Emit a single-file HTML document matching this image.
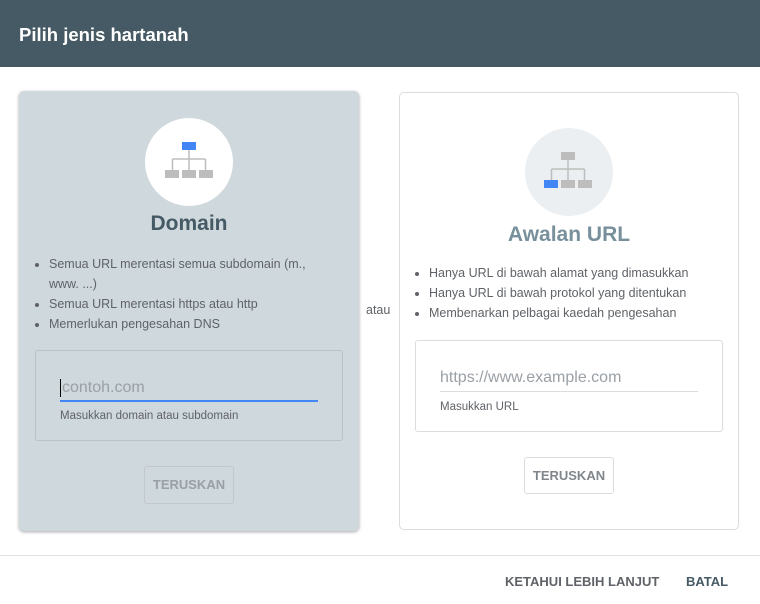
<!DOCTYPE html>
<html><head><style>
*{box-sizing:border-box;margin:0;padding:0}
body{width:760px;height:604px;background:#fff;font-family:"Liberation Sans",Arial,sans-serif;position:relative;overflow:hidden}
.hdr{position:absolute;left:0;top:0;width:760px;height:67px;background:#455a64;color:#fff;font-size:18.5px;font-weight:bold;padding:24px 0 0 19px}
.card{position:absolute;border-radius:5px}
.c1{left:19px;top:91px;width:340px;height:440px;background:#cfd8dc;box-shadow:0 1px 3px rgba(0,0,0,.35)}
.c2{left:399px;top:92px;width:340px;height:438px;background:#fff;border:1px solid #dadce0}
.circ{position:absolute;width:88px;height:88px;border-radius:50%}
.t{position:absolute;width:100%;text-align:center;font-weight:bold;font-size:21px}
ul{position:absolute;font-size:12.5px;color:#5f6368;line-height:20px;padding-left:15px}
.box{position:absolute;border:1px solid #bdc1c6;border-radius:3px}
.btn{position:absolute;border:1px solid #c4c8cc;border-radius:3px;font-size:13px;font-weight:bold;color:#9aa0a6;text-align:center}
</style></head><body>
<div class="hdr">Pilih jenis hartanah</div>
<div class="card c1">
 <div class="circ" style="left:126px;top:27px;background:#fff"></div>
 <svg style="position:absolute;left:146px;top:50px" width="50" height="40">
  <rect x="17" y="1" width="14" height="8" fill="#4285f4"/>
  <path d="M24 9V18M7.5 18H40.5M7.5 18V29M24 18V29M40.5 18V29" stroke="#bdbdbd" stroke-width="1.5" fill="none"/>
  <rect x="0" y="29" width="14" height="8" fill="#bdbdbd"/><rect x="17" y="29" width="14" height="8" fill="#bdbdbd"/><rect x="34" y="29" width="14" height="8" fill="#bdbdbd"/>
 </svg>
 <div class="t" style="top:121px;color:#455a64">Domain</div>
 <ul style="left:15px;top:163px;width:300px"><li>Semua URL merentasi semua subdomain (m., www. ...)</li><li>Semua URL merentasi https atau http</li><li>Memerlukan pengesahan DNS</li></ul>
 <div class="box" style="left:16px;top:259px;width:308px;height:91px">
  <div style="position:absolute;left:24px;top:28px;font-size:16px;color:#9aa0a6;border-left:1px solid #000;padding-left:1px">contoh.com</div>
  <div style="position:absolute;left:24px;top:49px;width:258px;height:2px;background:#4285f4"></div>
  <div style="position:absolute;left:24px;top:59px;font-size:11.5px;color:#5f6368">Masukkan domain atau subdomain</div>
 </div>
 <div class="btn" style="left:125px;top:375px;width:90px;height:38px;line-height:36px">TERUSKAN</div>
</div>
<div style="position:absolute;left:366px;top:303px;font-size:12.5px;color:#5f6368">atau</div>
<div class="card c2">
 <div class="circ" style="left:125px;top:35px;background:#eceff1"></div>
 <svg style="position:absolute;left:144px;top:58px" width="50" height="40">
  <rect x="17" y="1" width="14" height="8" fill="#bdbdbd"/>
  <path d="M24 9V18M7.5 18H40.5M7.5 18V29M24 18V29M40.5 18V29" stroke="#bdbdbd" stroke-width="1.5" fill="none"/>
  <rect x="0" y="29" width="14" height="8" fill="#4285f4"/><rect x="17" y="29" width="14" height="8" fill="#bdbdbd"/><rect x="34" y="29" width="14" height="8" fill="#bdbdbd"/>
 </svg>
 <div class="t" style="top:130px;color:#78909c">Awalan URL</div>
 <ul style="left:14px;top:170px;width:310px"><li>Hanya URL di bawah alamat yang dimasukkan</li><li>Hanya URL di bawah protokol yang ditentukan</li><li>Membenarkan pelbagai kaedah pengesahan</li></ul>
 <div class="box" style="left:15px;top:247px;width:308px;height:92px;border-color:#dadce0">
  <div style="position:absolute;left:24px;top:28px;font-size:16px;color:#9aa0a6">https://www.example.com</div>
  <div style="position:absolute;left:24px;top:50px;width:258px;height:1px;background:#dadce0"></div>
  <div style="position:absolute;left:24px;top:60px;font-size:11.5px;color:#5f6368">Masukkan URL</div>
 </div>
 <div class="btn" style="left:124px;top:364px;width:90px;height:37px;line-height:35px;border-color:#dadce0;color:#80868b">TERUSKAN</div>
</div>
<div style="position:absolute;left:0;top:555px;width:760px;height:1px;background:#e0e0e0"></div>
<div style="position:absolute;left:505px;top:574px;font-size:13px;font-weight:bold;color:#5f6368">KETAHUI LEBIH LANJUT</div>
<div style="position:absolute;left:686px;top:574px;font-size:13px;font-weight:bold;color:#455a64">BATAL</div>
</body></html>
